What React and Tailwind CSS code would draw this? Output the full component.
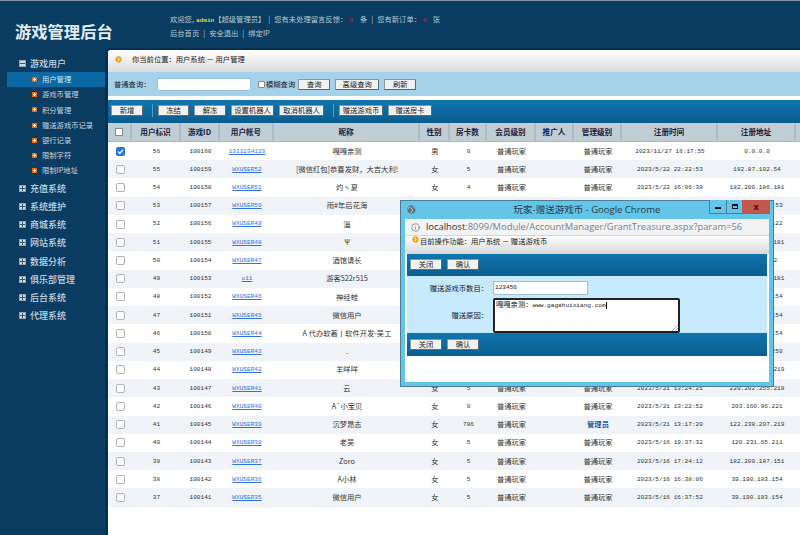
import { Info } from "lucide-react";

// Shared column template for the header row and the data rows
const COLS = "grid grid-cols-[24px_49px_39px_54px_146px_30px_37px_49px_38px_48px_96px_78px_4px]";
const MONO = "font-['Liberation_Mono',monospace] text-[6.1px]";

const SUB_MENU = ["用户管理", "游戏币管理", "积分管理", "赠送游戏币记录", "银行记录", "限制字符", "限制IP地址"];
const GROUPS = ["充值系统", "系统维护", "商城系统", "网站系统", "数据分析", "俱乐部管理", "后台系统", "代理系统"];
const HEADERS = ["用户标识", "游戏ID", "用户帐号", "昵称", "性别", "房卡数", "会员级别", "推广人", "管理级别", "注册时间", "注册地址"];

// Rows with null fields sit behind the popup, so only their visible cells are filled
const ROWS = [
  [56, 100160, "1311234123", "嘎嘎亲测", "男", 0, "普通玩家", "2023/11/27 16:17:55", "0.0.0.0"],
  [55, 100159, "WXUSER52", "[微信红包]恭喜发财，大吉大利!", "女", 5, "普通玩家", "2023/5/22 22:22:53", "182.87.102.54"],
  [54, 100158, "WXUSER51", "灼丶夏", "女", 4, "普通玩家", "2023/5/22 16:06:38", "182.200.186.181"],
  [53, 100157, "WXUSER50", "雨#年后花海", null, null, null, null, "182.200.186.53"],
  [52, 100156, "WXUSER49", "淄", null, null, null, null, "120.231.65.122"],
  [51, 100155, "WXUSER48", "Ψ", null, null, null, null, "182.200.186.181"],
  [50, 100154, "WXUSER47", "酒馆请长", null, null, null, null, "120.231.6.2"],
  [49, 100153, "o11", "游客522r515", null, null, null, null, "182.200.186.181"],
  [48, 100152, "WXUSER46", "神经蛙", null, null, null, null, "39.190.183.154"],
  [47, 100151, "WXUSER45", "微信用户", null, null, null, null, "39.190.183.154"],
  [46, 100150, "WXUSER44", "A 代办软著丨软件开发-吴工", null, null, null, null, "39.190.183.154"],
  [45, 100149, "WXUSER43", ".", null, null, null, null, "120.231.65.250"],
  [44, 100148, "WXUSER42", "羊咩咩", null, null, null, null, "122.238.207.219"],
  [43, 100147, "WXUSER41", "云", "女", 5, "普通玩家", "2023/5/21 13:24:21", "220.202.255.218"],
  [42, 100146, "WXUSER40", "A¯小宝贝", "女", 0, "普通玩家", "2023/5/21 13:22:52", "203.160.86.221"],
  [41, 100145, "WXUSER39", "沉梦昂志", "女", 786, "管理员", "2023/5/21 13:17:20", "122.238.207.219"],
  [40, 100144, "WXUSER38", "老吴", "女", 5, "普通玩家", "2023/5/16 19:37:32", "120.231.65.211"],
  [39, 100143, "WXUSER37", "Zoro", "女", 5, "普通玩家", "2023/5/16 17:24:12", "182.200.187.151"],
  [38, 100142, "WXUSER36", "A小林", "女", 5, "普通玩家", "2023/5/16 16:38:06", "39.190.183.154"],
  [37, 100141, "WXUSER35", "微信用户", "女", 5, "普通玩家", "2023/5/16 16:37:52", "39.190.183.154"],
];

// Small bevelled button used in every toolbar
function Btn({ label, w }) {
  return (
    <button className={`${w} h-[11px] shrink-0 flex items-center justify-center bg-[#f1f1f1] border border-[#8a97a0] border-b-[#5d6a73] border-r-[#5d6a73] rounded-[1px] text-[7.3px] leading-none text-[#222]`}>
      {label}
    </button>
  );
}

function OrangeDot({ className }) {
  return (
    <svg viewBox="0 0 8 8" className={className}>
      <circle cx="4" cy="4" r="3.6" fill="#f5a21b" />
      <path d="M3 2.2 L5 4 L3 5.8" fill="none" stroke="#fff" strokeWidth="1.1" />
    </svg>
  );
}

function TreeBox({ open }) {
  return (
    <span className="relative w-[7px] h-[7px] shrink-0 bg-[#d5dadd] border border-[#8fa3b0] flex items-center justify-center">
      <span className="w-[5px] h-px bg-[#33566f]" />
      {!open && <span className="absolute w-px h-[5px] bg-[#33566f]" />}
    </span>
  );
}

function Sidebar() {
  return (
    <div className="w-[105px] shrink-0 pt-[8px] text-[#c3d6e2]">
      <div className="h-[15px] flex items-center gap-[4px] pl-[19px]">
        <TreeBox open />
        <span className="text-[9px] leading-none font-medium">游戏用户</span>
      </div>
      <div className="mt-[1px] ml-[7px] mb-[1px]">
        {SUB_MENU.map((item, i) => (
          <div
            key={item}
            className={`h-[15.2px] flex items-center gap-[5px] pl-[25px] text-[7.3px] ${i === 0 ? "bg-[#0b68a3] text-[#d5e6f1]" : ""}`}
          >
            <span className="w-[5px] h-[5px] bg-[#ee6a12] flex items-center justify-center relative shrink-0">
              <span className="w-[3px] h-px bg-white" />
              <span className="absolute w-px h-[3px] bg-white" />
            </span>
            {item}
          </div>
        ))}
      </div>
      {GROUPS.map((g) => (
        <div key={g} className="h-[18.2px] flex items-center gap-[4px] pl-[19px]">
          <TreeBox />
          <span className="text-[9px] leading-none font-medium">{g}</span>
        </div>
      ))}
    </div>
  );
}

function Toolbar() {
  return (
    <div className="h-[23px] shrink-0 flex items-center pl-[3px] bg-gradient-to-b from-[#1075ad] to-[#0a5e90] border-b-2 border-[#0c5f8c]">
      <Btn label="新增" w="w-[32px]" />
      <span className="w-px h-[13px] bg-[#5c9cc4] ml-[9px] mr-[5px]" />
      <div className="flex gap-[5px]">
        <Btn label="冻结" w="w-[31px]" />
        <Btn label="解冻" w="w-[32px]" />
        <Btn label="设置机器人" w="w-[43px]" />
        <Btn label="取消机器人" w="w-[45px]" />
      </div>
      <span className="w-px h-[13px] bg-[#5c9cc4] ml-[9px] mr-[5px]" />
      <div className="flex gap-[5px]">
        <Btn label="赠送游戏币" w="w-[44px]" />
        <Btn label="赠送房卡" w="w-[44px]" />
      </div>
    </div>
  );
}

function UserTable() {
  return (
    <div>
      <div className={`${COLS} h-[19px] bg-[#c0cdd4] border-b border-[#aebbc4] text-[7.6px] font-bold text-[#1d1a3a]`}>
        <div className="flex items-center justify-center border-r-2 border-[#aebbc4]">
          <span className="w-[8px] h-[8px] bg-white border border-[#8b8b8b]" />
        </div>
        {HEADERS.map((h) => (
          <div key={h} className="flex items-center justify-center border-r-2 border-[#aebbc4]">
            {h}
          </div>
        ))}
        <div />
      </div>
      {ROWS.map((r, i) => (
        <div
          key={r[0]}
          className={`${COLS} h-[18.24px] items-center text-center text-[7.3px] text-[#333] ${i % 2 ? "bg-[#f0f3f8]" : "bg-white"}`}
        >
          <div className="flex justify-center">
            {i === 0 ? (
              <span className="w-[9px] h-[9px] rounded-[2px] bg-[#1f74e6] flex items-center justify-center">
                <svg viewBox="0 0 9 9" className="w-[9px] h-[9px]">
                  <path d="M2 4.6 L3.8 6.4 L7 2.6" fill="none" stroke="#fff" strokeWidth="1.4" />
                </svg>
              </span>
            ) : (
              <span className="w-[9px] h-[9px] rounded-[2px] bg-white border border-[#b2b2b2]" />
            )}
          </div>
          <div className={MONO}>{r[0]}</div>
          <div className={MONO}>{r[1]}</div>
          <div className={`${MONO} text-[#2f72e2] underline`}>{r[2]}</div>
          <div className="whitespace-nowrap">{r[3]}</div>
          <div>{r[4]}</div>
          <div className={MONO}>{r[5]}</div>
          <div>{r[6] && "普通玩家"}</div>
          <div />
          <div className={r[6] === "管理员" ? "text-[#1d5fae] font-bold" : ""}>{r[6]}</div>
          <div className={`${MONO} whitespace-nowrap`}>{r[7]}</div>
          <div className={`${MONO} whitespace-nowrap`}>{r[8]}</div>
          <div />
        </div>
      ))}
    </div>
  );
}

// Popup browser window floating over the table
function GrantWindow() {
  return (
    <div className="absolute left-[400px] top-[199px] w-[374px] h-[187px] flex flex-col bg-[#62c5e9] border border-[#4d7d95] px-[4px] pb-[4px] font-['Noto_Sans_CJK_SC',sans-serif]">
      <div className="h-[18px] shrink-0 relative flex items-center justify-center text-[9.5px] text-[#2a3b45] font-['Open_Sans','Noto_Sans_CJK_SC',sans-serif]">
        <svg viewBox="0 0 10 10" className="absolute left-[2px] top-[4px] w-[9px] h-[9px]">
          <circle cx="5" cy="5" r="4.6" fill="#5f7480" />
          <path d="M1 4 Q3 2 4 3 T6 5 T4 9 M6 1 Q8 3 9 4" fill="none" stroke="#c5d3da" strokeWidth="1" />
        </svg>
        玩家-赠送游戏币 - Google Chrome
        <div className="absolute right-[-1px] top-[-1px] flex h-[14px] border-b border-[#4d7d95]">
          <span className="w-[17px] flex items-center justify-center border-l border-[#4d7d95] bg-[#62c5e9]">
            <span className="w-[6px] h-[2px] bg-[#111] mt-[3px]" />
          </span>
          <span className="w-[16px] flex items-center justify-center border-l border-[#4d7d95] bg-[#62c5e9]">
            <span className="w-[6px] h-[5px] border border-t-2 border-[#111]" />
          </span>
          <span className="w-[28px] flex items-center justify-center bg-[#c2584e] text-[9px] font-bold text-[#222]">x</span>
        </div>
      </div>
      <div className="h-[17px] shrink-0 flex items-center gap-[6px] pl-[6px] bg-[#f1f3f5] border-b border-[#d4d8da] text-[9.4px] text-[#7b8288] font-['Open_Sans',sans-serif]">
        <Info size={9} strokeWidth={1.5} className="text-[#555]" />
        <span>
          <span className="text-[#333]">localhost</span>:8099/Module/AccountManager/GrantTreasure.aspx?param=56
        </span>
      </div>
      <div className="flex-1 bg-white flex flex-col">
        <div className="h-[18px] shrink-0 flex items-start gap-[1px] pl-[7px] bg-gradient-to-b from-white to-[#d8d8d8] text-[7.3px] text-[#222]">
          <OrangeDot className="w-[7px] h-[7px]" />
          <span className="leading-[10px]">目前操作功能：用户系统 － 赠送游戏币</span>
        </div>
        <div className="mx-[2px]">
          <div className="h-[22px] flex items-center gap-[5px] pl-[3px] bg-gradient-to-b from-[#1075ad] to-[#0a5e90] border-b border-[#0c5f8c]">
            <Btn label="关闭" w="w-[32px]" />
            <Btn label="确认" w="w-[32px]" />
          </div>
          <div className="h-[57px] bg-[#c6e9fb] pt-[5px] text-[7.3px] text-[#222]">
            <div className="flex items-center h-[14px]">
              <span className="w-[81px] text-right">赠送游戏币数目：</span>
              <span className={`ml-[5px] w-[95px] h-[14px] flex items-center pl-[1px] bg-white border border-[#9fc0dc] ${MONO}`}>123456</span>
            </div>
            <div className="flex items-center mt-[3px]">
              <span className="w-[81px] text-right">赠送原因：</span>
              <div className="relative ml-[5px] w-[187px] h-[35px] bg-white border-2 border-[#222] rounded-[2px] pl-[1px] leading-[9px] whitespace-nowrap">
                嘎嘎亲测：<span className={MONO}>www.gagahuixiang.com</span>
                <span className="inline-block w-px h-[7px] bg-black align-middle" />
                <svg viewBox="0 0 6 6" className="absolute right-0 bottom-0 w-[6px] h-[6px]">
                  <path d="M0 6 L6 0 M3 6 L6 3" stroke="#888" strokeWidth="0.7" />
                </svg>
              </div>
            </div>
          </div>
          <div className="h-[23px] flex items-center gap-[5px] pl-[3px] bg-gradient-to-b from-[#1075ad] to-[#0a5e90]">
            <Btn label="关闭" w="w-[32px]" />
            <Btn label="确认" w="w-[32px]" />
          </div>
        </div>
      </div>
    </div>
  );
}

export default function App() {
  return (
    <div className="relative w-[800px] h-[535px] overflow-hidden flex flex-col border-t border-[#8296a5] font-['Noto_Sans_CJK_SC','Liberation_Sans',sans-serif] bg-[repeating-linear-gradient(180deg,#0b3f66_0px,#0b3f66_1px,#083a60_1px,#083a60_2px)]">
      {/* Header */}
      <div className="h-[47px] shrink-0 flex">
        <div className="w-[170px] shrink-0 pl-[15px] pt-[20px] text-[16.3px] leading-[20px] font-bold text-[#e3edf3]">
          游戏管理后台
        </div>
        <div className="pt-[12px] text-[7.3px] leading-[13px] text-[#b4cbd9] whitespace-nowrap">
          <div>
            <span>欢迎您,</span>
            <span className={`${MONO} ml-[2px] font-bold text-[#d9d64a]`}>admin</span>
            <span>【超级管理员】</span>
            <span className="ml-[3px]">|</span>
            <span className="ml-[4px]">您有未处理留言反馈：</span>
            <span className={`${MONO} ml-[2px] text-[#c0272d]`}>0</span>
            <span className="ml-[7px]">条</span>
            <span className="ml-[4px]">|</span>
            <span className="ml-[4px]">您有新订单：</span>
            <span className={`${MONO} ml-[2px] text-[#c0272d]`}>0</span>
            <span className="ml-[6px]">张</span>
          </div>
          <div>
            <span>后台首页</span>
            <span className="ml-[4px]">|</span>
            <span className="ml-[4px]">安全退出</span>
            <span className="ml-[4px]">|</span>
            <span className="ml-[4px]">绑定IP</span>
          </div>
        </div>
      </div>

      <div className="flex-1 flex min-h-0">
        <Sidebar />
        <div className="flex-1 min-w-0 border-l-[3px] border-t-2 border-[#06304f] rounded-tl-[5px]">
          <div className="h-full bg-white flex flex-col rounded-tl-[3px]">
            {/* Breadcrumb */}
            <div className="h-[22px] shrink-0 flex items-center pl-[7px] gap-[10px] rounded-tl-[3px] bg-gradient-to-b from-white to-[#dcdcdc] text-[7.3px] text-[#222]">
              <OrangeDot className="w-[7px] h-[7px] -mt-[3px]" />
              <span className="-mt-[3px]">你当前位置：用户系统 － 用户管理</span>
            </div>

            {/* Search bar */}
            <div className="h-[24px] shrink-0 flex items-center pl-[6px] bg-[#a5d2ea] text-[7.3px] text-[#222]">
              <span className="w-[43px]">普通查询：</span>
              <span className="w-[94px] h-[13px] bg-white border border-[#9fc0dc]" />
              <span className="ml-[7px] w-[7px] h-[7px] bg-white border border-[#888] rounded-[1px]" />
              <span className="ml-[1px]">模糊查询</span>
              <div className="flex gap-[5px] ml-[3px] mt-[1px]">
                <Btn label="查询" w="w-[32px]" />
                <Btn label="高级查询" w="w-[44px]" />
                <Btn label="刷新" w="w-[32px]" />
              </div>
            </div>

            <div className="h-[4px] shrink-0" />
            <Toolbar />
            <UserTable />
          </div>
        </div>
      </div>

      <GrantWindow />
    </div>
  );
}
